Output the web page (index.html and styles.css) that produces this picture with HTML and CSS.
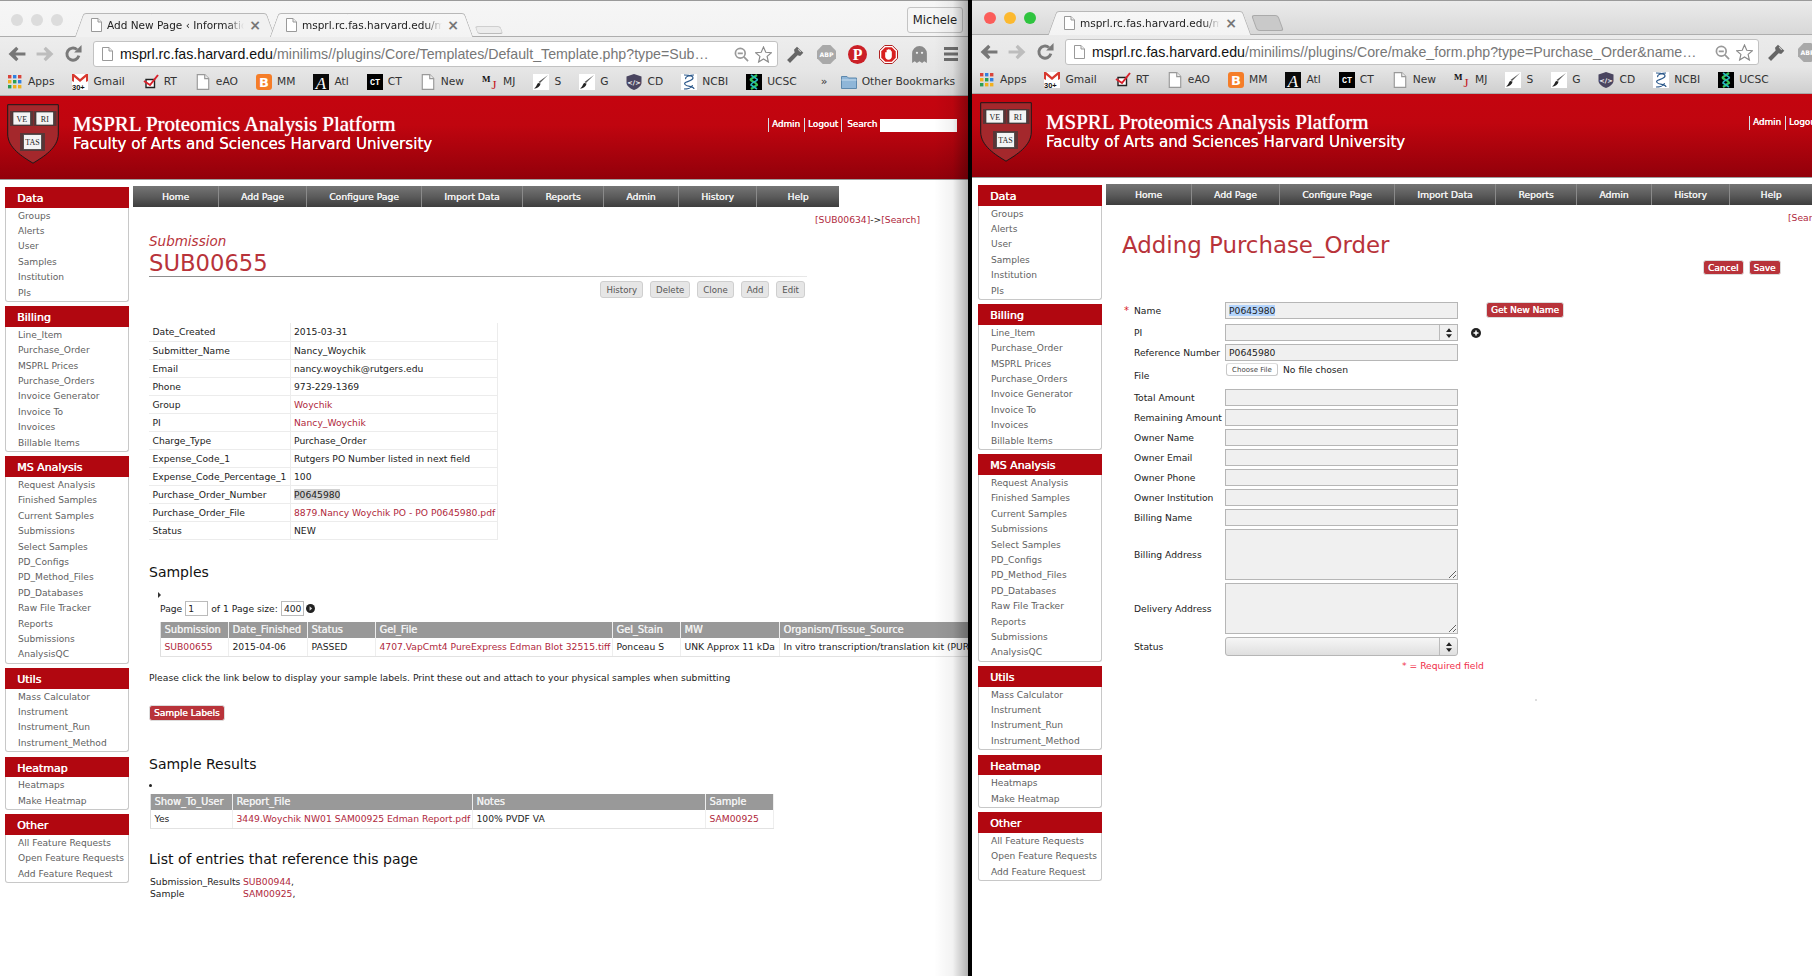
FILE: index.html
```html
<!DOCTYPE html>
<html lang="en">
<head>
<meta charset="utf-8">
<title>MSPRL Proteomics Analysis Platform</title>
<link rel="stylesheet" href="styles.css">
</head>
<body>
<svg class="sprite" aria-hidden="true">
  <symbol id="doc" viewBox="0 0 11 14"><path d="M.5.5H7L10.5 4V13.5H.5Z" fill="#fff" stroke="#999"/><path d="M7 .5V4H10.5" fill="#eee" stroke="#999"/></symbol>
  <symbol id="back" viewBox="0 0 16 16"><path d="M.5 8 7.3 1.6 9.3 3.5 6.6 6.6H15.5V9.4H6.6L9.3 12.5 7.3 14.4Z"/></symbol>
  <symbol id="forward" viewBox="0 0 16 16"><path d="M15.5 8 8.7 1.6 6.7 3.5 9.4 6.6H.5V9.4H9.4L6.7 12.5 8.7 14.4Z"/></symbol>
  <symbol id="reload" viewBox="0 0 16 16"><path d="M13.2 9.5A5.4 5.4 0 1 1 11.5 4" fill="none" stroke="#7a7a7a" stroke-width="2.6"/><path d="M9 6.6H15.6V0Z" fill="#7a7a7a"/></symbol>
  <symbol id="mag" viewBox="0 0 16 16"><circle cx="6.7" cy="6.7" r="5.2" fill="none" stroke="#999" stroke-width="1.8"/><path d="M4 6.7H9.4M10.6 10.6 15 15" stroke="#999" stroke-width="1.8"/></symbol>
  <symbol id="star" viewBox="0 0 18 18"><path d="M9 1 11.4 6.6 17.4 7.1 12.8 11 14.2 17 9 13.8 3.8 17 5.2 11 .6 7.1 6.6 6.6Z" fill="#fff" stroke="#8a8a8a" stroke-width="1.2"/></symbol>
  <symbol id="key" viewBox="0 0 18 18"><path d="M10.4 1.6 16.4 7.4 13.4 10.4 11 9.8 3.8 17 1 14.2 8.2 7 7.6 4.4Z" fill="#666"/><path d="M11.5 4 14 6.5" stroke="#ccc"/></symbol>
  <symbol id="stop" viewBox="0 0 20 20"><path d="M6 .5H14L19.5 6V14L14 19.5H6L.5 14V6Z" fill="#fff" stroke="#a11"/><path d="M6.6 2.4H13.4L17.6 6.6V13.4L13.4 17.6H6.6L2.4 13.4V6.6Z" fill="#d8201f"/><path d="M6.5 7.5V12C6.5 14 8 15.5 10 15.5S13.5 14 13.5 12V6.5H12.5V5H11V4.5H9.5V5H8V7.5Z" fill="#fff"/></symbol>
  <symbol id="ghost" viewBox="0 0 16 18"><path d="M1 17V8A7 7 0 0 1 15 8V17L12.5 15.5 10.5 17 8 15.5 5.5 17 3.5 15.5Z" fill="#8a8a8a"/><circle cx="5.6" cy="7.4" r="1.1" fill="#eee"/><circle cx="10.4" cy="7.4" r="1.1" fill="#eee"/></symbol>
  <symbol id="menu" viewBox="0 0 14 16"><path d="M0 1H14V4H0ZM0 6.5H14V9.5H0ZM0 12H14V15H0Z" fill="#6e6e6e"/></symbol>
  <symbol id="apps" viewBox="0 0 14 14"><path d="M0 0H3.4V3.4H0Z" fill="#d9443a"/><path d="M5 0H8.4V3.4H5Z" fill="#2f7fe0"/><path d="M10 0H13.4V3.4H10Z" fill="#d9443a"/><path d="M0 5H3.4V8.4H0Z" fill="#f2b01e"/><path d="M5 5H8.4V8.4H5Z" fill="#2a9f55"/><path d="M10 5H13.4V8.4H10Z" fill="#2f7fe0"/><path d="M0 10H3.4V13.4H0Z" fill="#2a9f55"/><path d="M5 10H8.4V13.4H5Z" fill="#f2b01e"/><path d="M10 10H13.4V13.4H10Z" fill="#f2b01e"/></symbol>
  <symbol id="rt" viewBox="0 0 16 16"><path d="M3 5.5H11.5V13.5H3Z" fill="#fff" stroke="#222" stroke-width="1.4"/><path d="M1 7 7 11 15 1" fill="none" stroke="#d8202a" stroke-width="2"/></symbol>
  <symbol id="brush" viewBox="0 0 16 16"><path d="M0 0H16V16H0Z" fill="#fff"/><path d="M15 1 7 9 5.5 8Z" fill="#555"/><path d="M7.5 9.5C7 13 4 14.5 1 14.5 3 13.5 3.5 11 5 9Z" fill="#222"/></symbol>
  <symbol id="ncbi" viewBox="0 0 16 16"><path d="M0 0H16V16H0Z" fill="#fff"/><path d="M3 1C10 1 14 3 11 5.5S2 8 4 10.5 13 12 13 15M13 1C9 1 3 3 5 5M3 15C6 15 11 14 11.5 11" fill="none" stroke="#2d5a8c" stroke-width="1.2"/></symbol>
  <symbol id="ucsc" viewBox="0 0 16 16"><path d="M0 0H16V16H0Z" fill="#000"/><path d="M11 1 5 5C3 7 11 8 11 11L5 15" fill="none" stroke="#35c65a" stroke-width="2.2"/><path d="M5 1 11 5C13 7 5 8 5 11L11 15" fill="none" stroke="#27b9c2" stroke-width="1.6"/></symbol>
  <symbol id="folder" viewBox="0 0 16 14"><path d="M.5 1.5H6L7.5 3H15.5V13.5H.5Z" fill="#8fb6d8" stroke="#5d88ad"/><path d="M.5 5H15.5" stroke="#c6dcee"/></symbol>
  <symbol id="plus" viewBox="0 0 10 10"><circle cx="5" cy="5" r="5" fill="#222"/><path d="M2.5 5H7.5M5 2.5V7.5" stroke="#fff" stroke-width="1.5"/></symbol>
  <symbol id="go" viewBox="0 0 10 10"><circle cx="5" cy="5" r="5" fill="#222"/><path d="M4 2.5 6.800 5 4 7.5Z" fill="#ddd"/></symbol>
  <symbol id="updown" viewBox="0 0 8 13"><path d="M4 0 8 5H0ZM4 13 0 8H8Z" fill="#222"/></symbol>
</svg>

<section class="window window-idle">
  <div class="tabbar">
    <div class="lights"><i class="light"></i><i class="light"></i><i class="light"></i></div>
    <div class="tab"><svg class="doc"><use href="#doc"/></svg><span class="tab-title">Add New Page ‹ Information</span><span class="tab-x">×</span></div>
    <div class="tab tab-active"><svg class="doc"><use href="#doc"/></svg><span class="tab-title">msprl.rc.fas.harvard.edu/minilims</span><span class="tab-x">×</span></div>
    <div class="newtab"></div>
    <div class="profile">Michele</div>
  </div>
  <div class="toolbar">
    <svg class="nav-ic nav-dark"><use href="#back"/></svg>
    <svg class="nav-ic nav-light"><use href="#forward"/></svg>
    <svg class="nav-ic"><use href="#reload"/></svg>
    <div class="omnibox">
      <svg class="doc"><use href="#doc"/></svg>
      <span class="url"><b>msprl.rc.fas.harvard.edu</b>/minilims//plugins/Core/Templates/Default_Template.php?type=Sub…</span>
      <svg class="omni-ic"><use href="#mag"/></svg>
      <svg class="omni-star"><use href="#star"/></svg>
    </div>
    <div class="ext"><svg class="ext-ic"><use href="#key"/></svg></div>
    <div class="ext"><svg class="ext-ic" viewBox="0 0 20 20"><path d="M6 0H14L20 6V14L14 20H6L0 14V6Z" fill="#a9a9a9"/><text x="10" y="13" class="svg-abp">ABP</text></svg></div>
    <div class="ext"><svg class="ext-ic" viewBox="0 0 18 18"><circle cx="9" cy="9" r="9" fill="#cb2027"/><text x="9" y="14.5" class="svg-pin">P</text></svg></div>
    <div class="ext"><svg class="ext-ic"><use href="#stop"/></svg></div>
    <div class="ext"><svg class="ext-ic"><use href="#ghost"/></svg></div>
    <div class="ext"><svg class="ext-menu"><use href="#menu"/></svg></div>
  </div>
  <div class="bookmarks">
    <span class="bm"><svg class="bm-ic bm-apps"><use href="#apps"/></svg>Apps</span>
    <span class="bm"><svg class="bm-ic" viewBox="0 0 16 16"><path d="M0 0H16V16H0Z" fill="#fff"/><path d="M0 0H2L8 5 14 0H16V7L14 8V3L8 8 2 3V8L0 7Z" fill="#d8392f"/><text x="0" y="15.6" class="svg-count">30+</text></svg>Gmail</span>
    <span class="bm"><svg class="bm-ic"><use href="#rt"/></svg>RT</span>
    <span class="bm"><svg class="bm-ic"><use href="#doc"/></svg>eAO</span>
    <span class="bm"><svg class="bm-ic" viewBox="0 0 16 16"><rect width="16" height="16" rx="3" fill="#f57d28"/><text x="8" y="13" class="svg-blog">B</text></svg>MM</span>
    <span class="bm"><svg class="bm-ic" viewBox="0 0 16 16"><path d="M0 0H16V16H0Z" fill="#0a0a0a"/><text x="8" y="14.5" class="svg-atl">A</text></svg>Atl</span>
    <span class="bm"><svg class="bm-ic" viewBox="0 0 16 16"><path d="M0 0H16V16H0Z" fill="#000"/><text x="8" y="10.5" class="svg-ct">CT</text></svg>CT</span>
    <span class="bm"><svg class="bm-ic"><use href="#doc"/></svg>New</span>
    <span class="bm"><svg class="bm-ic" viewBox="0 0 16 16"><text x="0" y="8" class="svg-m">M</text><text x="9.5" y="15" class="svg-j">J</text></svg>MJ</span>
    <span class="bm"><svg class="bm-ic"><use href="#brush"/></svg>S</span>
    <span class="bm"><svg class="bm-ic"><use href="#brush"/></svg>G</span>
    <span class="bm"><svg class="bm-ic" viewBox="0 0 16 16"><path d="M8 0 15.5 2.5V9C15.5 12 11 15 8 16 5 15 .5 12 .5 9V2.5Z" fill="#4a4560"/><text x="8" y="10.5" class="svg-cd">&lt;/&gt;</text></svg>CD</span>
    <span class="bm"><svg class="bm-ic"><use href="#ncbi"/></svg>NCBI</span>
    <span class="bm"><svg class="bm-ic"><use href="#ucsc"/></svg>UCSC</span>
    <span class="bm-more">»</span>
    <span class="bm"><svg class="bm-ic"><use href="#folder"/></svg>Other Bookmarks</span>
  </div>
  <header class="masthead">
    <svg class="crest" viewBox="0 0 52 60">
      <path d="M.7.7H51.3V30C51.3 44 36 53 26 59.2 16 53 .7 44 .7 30Z" fill="#a4282c" stroke="#1a1a1a"/>
      <path d="M3 7H26V22H3ZM26.500 7H49.500V22H26.500ZM13 29H38V47H13Z" fill="#3a3a3a" opacity=".7"/>
      <path d="M6 8H23.500V21H6ZM29 8H46.500V21H29ZM16.500 30.500H34.500V45.500H16.500Z" fill="#f4f4f4" stroke="#333" stroke-width=".7"/>
      <text x="14.800" y="18" class="svg-crest">VE</text><text x="37.800" y="18" class="svg-crest">RI</text><text x="25.500" y="41" class="svg-crest">TAS</text>
    </svg>
    <div class="brand">
      <div class="brand-title">MSPRL Proteomics Analysis Platform</div>
      <div class="brand-sub">Faculty of Arts and Sciences Harvard University</div>
    </div>
    <div class="userlinks"><a class="ul">Admin</a><a class="ul">Logout</a><a class="ul">Search</a><input class="search"></div>
  </header>
  <div class="page">
    <aside class="sidebar">
      <div class="panel"><h3>Data</h3><a>Groups</a><a>Alerts</a><a>User</a><a>Samples</a><a>Institution</a><a>PIs</a></div>
      <div class="panel"><h3>Billing</h3><a>Line_Item</a><a>Purchase_Order</a><a>MSPRL Prices</a><a>Purchase_Orders</a><a>Invoice Generator</a><a>Invoice To</a><a>Invoices</a><a>Billable Items</a></div>
      <div class="panel"><h3>MS Analysis</h3><a>Request Analysis</a><a>Finished Samples</a><a>Current Samples</a><a>Submissions</a><a>Select Samples</a><a>PD_Configs</a><a>PD_Method_Files</a><a>PD_Databases</a><a>Raw File Tracker</a><a>Reports</a><a>Submissions</a><a>AnalysisQC</a></div>
      <div class="panel"><h3>Utils</h3><a>Mass Calculator</a><a>Instrument</a><a>Instrument_Run</a><a>Instrument_Method</a></div>
      <div class="panel"><h3>Heatmap</h3><a>Heatmaps</a><a>Make Heatmap</a></div>
      <div class="panel"><h3>Other</h3><a>All Feature Requests</a><a>Open Feature Requests</a><a>Add Feature Request</a></div>
    </aside>
    <main class="main">
      <nav class="topnav"><a class="n-home">Home</a><a class="n-add">Add Page</a><a class="n-conf">Configure Page</a><a class="n-imp">Import Data</a><a class="n-rep">Reports</a><a class="n-adm">Admin</a><a class="n-his">History</a><a class="n-help">Help</a></nav>
      <div class="crumb"><a class="link">[SUB00634]</a>-&gt;<a class="link">[Search]</a></div>
      <div class="content">
        <div class="kind">Submission</div>
        <h1 class="record">SUB00655</h1>
        <div class="actions"><button class="btn">History</button><button class="btn">Delete</button><button class="btn">Clone</button><button class="btn">Add</button><button class="btn">Edit</button></div>
        <table class="props">
          <tr><td>Date_Created</td><td>2015-03-31</td></tr>
          <tr><td>Submitter_Name</td><td>Nancy_Woychik</td></tr>
          <tr><td>Email</td><td>nancy.woychik@rutgers.edu</td></tr>
          <tr><td>Phone</td><td>973-229-1369</td></tr>
          <tr><td>Group</td><td><a class="link">Woychik</a></td></tr>
          <tr><td>PI</td><td><a class="link">Nancy_Woychik</a></td></tr>
          <tr><td>Charge_Type</td><td>Purchase_Order</td></tr>
          <tr><td>Expense_Code_1</td><td>Rutgers PO Number listed in next field</td></tr>
          <tr><td>Expense_Code_Percentage_1</td><td>100</td></tr>
          <tr><td>Purchase_Order_Number</td><td><span class="picked">P0645980</span></td></tr>
          <tr><td>Purchase_Order_File</td><td><a class="link">8879.Nancy Woychik PO - PO P0645980.pdf</a></td></tr>
          <tr><td>Status</td><td>NEW</td></tr>
        </table>
        <h2 class="sec sec-samples">Samples</h2>
        <div class="triangle"></div>
        <div class="pager">Page <input class="pg pg-page" value="1"> <span class="pg-of">of 1 Page size:</span> <input class="pg pg-size" value="400"> <svg class="pg-go"><use href="#go"/></svg></div>
        <table class="grid grid-samples">
          <tr><th>Submission</th><th>Date_Finished</th><th>Status</th><th>Gel_File</th><th>Gel_Stain</th><th>MW</th><th>Organism/Tissue_Source</th></tr>
          <tr><td><a class="link">SUB00655</a></td><td>2015-04-06</td><td>PASSED</td><td><a class="link">4707.VapCmt4 PureExpress Edman Blot 32515.tiff</a></td><td>Ponceau S</td><td>UNK Approx 11 kDa</td><td>In vitro transcription/translation kit (PURExpress)</td></tr>
        </table>
        <p class="note">Please click the link below to display your sample labels. Print these out and attach to your physical samples when submitting</p>
        <button class="btn-red btn-labels">Sample Labels</button>
        <h2 class="sec sec-results">Sample Results</h2>
        <div class="dot"></div>
        <table class="grid grid-results">
          <tr><th>Show_To_User</th><th>Report_File</th><th>Notes</th><th>Sample</th></tr>
          <tr><td>Yes</td><td><a class="link">3449.Woychik NW01 SAM00925 Edman Report.pdf</a></td><td>100% PVDF VA</td><td><a class="link">SAM00925</a></td></tr>
        </table>
        <h2 class="sec sec-refs">List of entries that reference this page</h2>
        <div class="refs"><span>Submission_Results</span><span><a class="link">SUB00944</a>,</span><span>Sample</span><span><a class="link">SAM00925</a>,</span></div>
      </div>
    </main>
  </div>
</section>

<section class="window window-active">
  <div class="tabbar">
    <div class="lights"><i class="light red"></i><i class="light amber"></i><i class="light green"></i></div>
    <div class="tab tab-active"><svg class="doc"><use href="#doc"/></svg><span class="tab-title">msprl.rc.fas.harvard.edu/minilims</span><span class="tab-x">×</span></div>
    <div class="newtab"></div>
  </div>
  <div class="toolbar">
    <svg class="nav-ic nav-dark"><use href="#back"/></svg>
    <svg class="nav-ic nav-light"><use href="#forward"/></svg>
    <svg class="nav-ic"><use href="#reload"/></svg>
    <div class="omnibox">
      <svg class="doc"><use href="#doc"/></svg>
      <span class="url"><b>msprl.rc.fas.harvard.edu</b>/minilims//plugins/Core/make_form.php?type=Purchase_Order&amp;name…</span>
      <svg class="omni-ic"><use href="#mag"/></svg>
      <svg class="omni-star"><use href="#star"/></svg>
    </div>
    <div class="ext"><svg class="ext-ic"><use href="#key"/></svg></div>
    <div class="ext"><svg class="ext-ic" viewBox="0 0 20 20"><path d="M6 0H14L20 6V14L14 20H6L0 14V6Z" fill="#a9a9a9"/><text x="10" y="13" class="svg-abp">ABP</text></svg></div>
  </div>
  <div class="bookmarks">
    <span class="bm"><svg class="bm-ic bm-apps"><use href="#apps"/></svg>Apps</span>
    <span class="bm"><svg class="bm-ic" viewBox="0 0 16 16"><path d="M0 0H16V16H0Z" fill="#fff"/><path d="M0 0H2L8 5 14 0H16V7L14 8V3L8 8 2 3V8L0 7Z" fill="#d8392f"/><text x="0" y="15.6" class="svg-count">30+</text></svg>Gmail</span>
    <span class="bm"><svg class="bm-ic"><use href="#rt"/></svg>RT</span>
    <span class="bm"><svg class="bm-ic"><use href="#doc"/></svg>eAO</span>
    <span class="bm"><svg class="bm-ic" viewBox="0 0 16 16"><rect width="16" height="16" rx="3" fill="#f57d28"/><text x="8" y="13" class="svg-blog">B</text></svg>MM</span>
    <span class="bm"><svg class="bm-ic" viewBox="0 0 16 16"><path d="M0 0H16V16H0Z" fill="#0a0a0a"/><text x="8" y="14.5" class="svg-atl">A</text></svg>Atl</span>
    <span class="bm"><svg class="bm-ic" viewBox="0 0 16 16"><path d="M0 0H16V16H0Z" fill="#000"/><text x="8" y="10.5" class="svg-ct">CT</text></svg>CT</span>
    <span class="bm"><svg class="bm-ic"><use href="#doc"/></svg>New</span>
    <span class="bm"><svg class="bm-ic" viewBox="0 0 16 16"><text x="0" y="8" class="svg-m">M</text><text x="9.5" y="15" class="svg-j">J</text></svg>MJ</span>
    <span class="bm"><svg class="bm-ic"><use href="#brush"/></svg>S</span>
    <span class="bm"><svg class="bm-ic"><use href="#brush"/></svg>G</span>
    <span class="bm"><svg class="bm-ic" viewBox="0 0 16 16"><path d="M8 0 15.5 2.5V9C15.5 12 11 15 8 16 5 15 .5 12 .5 9V2.5Z" fill="#4a4560"/><text x="8" y="10.5" class="svg-cd">&lt;/&gt;</text></svg>CD</span>
    <span class="bm"><svg class="bm-ic"><use href="#ncbi"/></svg>NCBI</span>
    <span class="bm"><svg class="bm-ic"><use href="#ucsc"/></svg>UCSC</span>
    <span class="bm-more">»</span>
  </div>
  <header class="masthead">
    <svg class="crest" viewBox="0 0 52 60">
      <path d="M.7.7H51.3V30C51.3 44 36 53 26 59.2 16 53 .7 44 .7 30Z" fill="#a4282c" stroke="#1a1a1a"/>
      <path d="M3 7H26V22H3ZM26.500 7H49.500V22H26.500ZM13 29H38V47H13Z" fill="#3a3a3a" opacity=".7"/>
      <path d="M6 8H23.500V21H6ZM29 8H46.500V21H29ZM16.500 30.500H34.500V45.500H16.500Z" fill="#f4f4f4" stroke="#333" stroke-width=".7"/>
      <text x="14.800" y="18" class="svg-crest">VE</text><text x="37.800" y="18" class="svg-crest">RI</text><text x="25.500" y="41" class="svg-crest">TAS</text>
    </svg>
    <div class="brand">
      <div class="brand-title">MSPRL Proteomics Analysis Platform</div>
      <div class="brand-sub">Faculty of Arts and Sciences Harvard University</div>
    </div>
    <div class="userlinks"><a class="ul">Admin</a><a class="ul">Logout</a></div>
  </header>
  <div class="page">
    <aside class="sidebar">
      <div class="panel"><h3>Data</h3><a>Groups</a><a>Alerts</a><a>User</a><a>Samples</a><a>Institution</a><a>PIs</a></div>
      <div class="panel"><h3>Billing</h3><a>Line_Item</a><a>Purchase_Order</a><a>MSPRL Prices</a><a>Purchase_Orders</a><a>Invoice Generator</a><a>Invoice To</a><a>Invoices</a><a>Billable Items</a></div>
      <div class="panel"><h3>MS Analysis</h3><a>Request Analysis</a><a>Finished Samples</a><a>Current Samples</a><a>Submissions</a><a>Select Samples</a><a>PD_Configs</a><a>PD_Method_Files</a><a>PD_Databases</a><a>Raw File Tracker</a><a>Reports</a><a>Submissions</a><a>AnalysisQC</a></div>
      <div class="panel"><h3>Utils</h3><a>Mass Calculator</a><a>Instrument</a><a>Instrument_Run</a><a>Instrument_Method</a></div>
      <div class="panel"><h3>Heatmap</h3><a>Heatmaps</a><a>Make Heatmap</a></div>
      <div class="panel"><h3>Other</h3><a>All Feature Requests</a><a>Open Feature Requests</a><a>Add Feature Request</a></div>
    </aside>
    <main class="main">
      <nav class="topnav"><a class="n-home">Home</a><a class="n-add">Add Page</a><a class="n-conf">Configure Page</a><a class="n-imp">Import Data</a><a class="n-rep">Reports</a><a class="n-adm">Admin</a><a class="n-his">History</a><a class="n-help">Help</a></nav>
      <div class="crumb"><a class="link">[Search]</a></div>
      <div class="content">
        <h1 class="adding">Adding Purchase_Order</h1>
        <div class="form-actions"><button class="btn-red">Cancel</button><button class="btn-red">Save</button></div>
        <form class="form">
          <span class="req">*</span><label>Name</label><div class="field"><span class="sel">P0645980</span></div><button type="button" class="btn-red btn-newname">Get New Name</button>
          <span></span><label>PI</label><div class="select"><span class="select-box"></span><span class="select-arrows"><svg class="updown"><use href="#updown"/></svg></span></div><svg class="plus"><use href="#plus"/></svg>
          <span></span><label>Reference Number</label><input class="field" value="P0645980"><span></span>
          <span></span><label>File</label><div class="file"><span class="file-btn">Choose File</span><span>No file chosen</span></div><span></span>
          <span></span><label>Total Amount</label><input class="field"><span></span>
          <span></span><label>Remaining Amount</label><input class="field"><span></span>
          <span></span><label>Owner Name</label><input class="field"><span></span>
          <span></span><label>Owner Email</label><input class="field"><span></span>
          <span></span><label>Owner Phone</label><input class="field"><span></span>
          <span></span><label>Owner Institution</label><input class="field"><span></span>
          <span></span><label>Billing Name</label><input class="field"><span></span>
          <span></span><label>Billing Address</label><textarea class="area"></textarea><span></span>
          <span></span><label>Delivery Address</label><textarea class="area"></textarea><span></span>
          <span></span><label>Status</label><div class="select select-status"><span class="select-box"></span><span class="select-arrows"><svg class="updown"><use href="#updown"/></svg></span></div><span></span>
        </form>
        <div class="required-note">* = Required field</div>
        <div class="speck"></div>
      </div>
    </main>
  </div>
</section>
</body>
</html>
```
FILE: styles.css
```css
* { box-sizing: border-box; }
html, body { margin: 0; padding: 0; }
body {
  width: 1812px; height: 976px; overflow: hidden; display: flex; gap: 4px;
  background: #000; font-family: "DejaVu Sans", sans-serif; font-size: 9.2px; color: #222;
}
.sprite { position: absolute; width: 0; height: 0; }
a { text-decoration: none; color: inherit; }
svg { display: block; flex: none; }

/* windows */
.window { position: relative; height: 976px; overflow: hidden; background: #fff; }
.window-idle { width: 968px; --page-pad: 5px; --tabbar: 37px; --brand: 695px; --crest: 7px; --omni: 685px; --more: 6px;
  --bar-a: #f6f6f6; --bar-b: #f3f3f3; --bar-c: #ededed; --bar-d: #d9d9d9; }
.window-active { width: 840px; --page-pad: 6px; --tabbar: 35px; --brand: 703px; --crest: 8px; --omni: 694px; --more: 26px;
  --bar-a: #ebebeb; --bar-b: #d8d8d8; --bar-c: #ebebeb; --bar-d: #cfcfcf; }
.window-idle::after {
  content: ""; position: absolute; top: 0; right: 0; bottom: 0; width: 34px; pointer-events: none;
  background: linear-gradient(90deg, rgba(0,0,0,0), rgba(0,0,0,.05) 55%, rgba(0,0,0,.3));
}

/* tab strip */
.tabbar {
  height: var(--tabbar); display: flex; align-items: flex-end;
  background: linear-gradient(var(--bar-a), var(--bar-b));
  border-top: 1px solid #9a9a9a; border-bottom: 1px solid #aeaeae;
}
.lights { display: flex; gap: 8px; width: 79px; padding: 0 0 0 11px; align-self: flex-start; margin-top: 13px; }
.window-active .lights { margin-top: 11px; width: 80px; padding-left: 12px; }
.light { width: 12px; height: 12px; border-radius: 50%; background: #dcdcdc; }
.red { background: #fb5d5a; }
.amber { background: #fcb92f; }
.green { background: #2fc43f; }
.tab {
  position: relative; z-index: 0; width: 192px; height: 24px; margin-right: 3px; margin-bottom: -1px;
  display: flex; align-items: center; padding: 0 10px 0 12px; font-size: 10.5px; color: #222;
}
.tab-active { width: 195px; }
.tab::before, .tab::after {
  content: ""; position: absolute; top: 0; bottom: 0; width: 60%; z-index: -1;
  background: #f1f1f1; border: 1px solid #b8b8b8; border-bottom: 0;
}
.tab::before { left: 0; border-right: 0; transform: skewX(-20deg); border-radius: 3px 0 0 0; }
.tab::after { right: 0; border-left: 0; transform: skewX(20deg); border-radius: 0 3px 0 0; }
.tab-active::before, .tab-active::after { background: linear-gradient(#f7f7f7, #f3f3f3); }
.doc { width: 11px; height: 14px; margin-right: 5px; }
.tab-title {
  flex: 1; overflow: hidden; white-space: nowrap;
  -webkit-mask-image: linear-gradient(90deg, #000 88%, transparent);
  mask-image: linear-gradient(90deg, #000 88%, transparent);
}
.tab-x { width: 12px; margin-left: 5px; color: #777; font-size: 14px; font-weight: 700; text-align: center; }
.newtab {
  width: 26px; height: 8px; margin: 0 0 2px 4px; background: #ececec;
  border: 1px solid #cfcfcf; border-bottom-color: #bbb; border-radius: 3px; transform: skewX(20deg);
}
.window-active .newtab { height: 16px; margin-bottom: 3px; width: 27px; background: #c9c9c9; border-color: #aaa; }
.profile {
  margin: 0 5px 3px auto; width: 56px; height: 26px; line-height: 24px; text-align: center;
  border: 1px solid #c4c4c4; border-radius: 3px; background: #f6f6f6; font-size: 11.6px; color: #222;
}

/* toolbar */
.toolbar {
  height: 32px; padding: 2px 0 0 8px; display: flex; align-items: center;
  background: linear-gradient(var(--bar-c), #e6e6e6);
}
.nav-ic { width: 18px; height: 18px; margin-right: 10px; }
.nav-dark { fill: #777; }
.nav-light { fill: #bdbdbd; }
.omnibox {
  width: var(--omni); height: 26px; margin-left: 1px; flex: none; display: flex; align-items: center; padding: 0 5px 0 8px;
  background: #fff; border: 1px solid #c2c2c2; border-radius: 3px;
}
.omnibox .doc { margin-right: 7px; }
.url { flex: 1; overflow: hidden; white-space: nowrap; font: 14.2px "Liberation Sans", sans-serif; color: #777; }
.url b { font-weight: 400; color: #111; }
.omni-ic { width: 15px; height: 15px; margin-left: 6px; }
.omni-star { width: 17px; height: 17px; margin-left: 6px; }
.ext { width: 31px; display: flex; justify-content: center; flex: none; }
.omnibox + .ext { margin-left: 2px; }
.ext-ic { width: 19px; height: 19px; }
.ext-menu { width: 14px; height: 16px; }

/* bookmarks */
.bookmarks {
  height: 27px; padding: 0 0 1px 8px; display: flex; align-items: center; gap: 18px; overflow: hidden;
  background: linear-gradient(#e6e6e6, var(--bar-d)); border-bottom: 1px solid #a9a9a9;
  font-size: 10.7px; color: #333; white-space: nowrap;
}
.bm { display: flex; align-items: center; gap: 5px; flex: none; }
.bm-ic { width: 16px; height: 16px; }
.bm-apps { width: 14px; height: 14px; margin-right: 1px; }
.bm-more { width: 8px; margin-left: var(--more); margin-right: -6px; font-size: 11px; color: #333; flex: none; }

/* masthead */
.masthead {
  height: 84px; display: flex; align-items: flex-start; padding-left: var(--crest);
  background: linear-gradient(#c4040f, #c0050f 35%, #92000a);
  border-bottom: 1px solid #9d9d9d; color: #fff;
}
.crest { width: 52px; height: 60px; margin-top: 8px; }
.brand { width: var(--brand); flex: none; margin-left: 14px; padding-top: 16px; }
.brand-title { font: 20.9px/24px "Liberation Serif", serif; text-shadow: 0 0 1px #fff; white-space: nowrap; }
.brand-sub { font-size: 15.14px; line-height: 18px; margin-top: -1px; white-space: nowrap; text-shadow: 0 0 .6px #fff; }
.userlinks { display: flex; align-items: center; height: 14px; margin-top: 22px; flex: none; font-size: 8.8px; text-shadow: .3px 0 0 #fff; }
.ul { display: block; height: 14px; line-height: 13px; padding: 0 3px; border-left: 1px solid #d5dfe8; margin-right: 1px; }
.ul + .ul { margin-right: 0; }
.ul + .ul + .ul { padding-left: 5px; }
.search { width: 77px; height: 13px; border: 0; padding: 0; background: #fff; }

/* page */
.page { display: flex; align-items: flex-start; padding-left: var(--page-pad); }
.sidebar { width: 124px; flex: none; padding-top: 7px; display: flex; flex-direction: column; gap: 4.4px; }
.panel { background: #fff; border: 1px solid #c8c8c8; border-top: 0; border-radius: 0 0 3px 3px; }
.panel h3 {
  margin: 0 -1px 1px; height: 20.6px; padding-left: 12px; line-height: 23px;
  background: #b10710; color: #fff; font-size: 11px; font-weight: 400; text-shadow: .4px 0 0 #fff;
}
.panel a { display: block; height: 15.4px; line-height: 15.4px; padding-left: 12px; color: #5f5f5f; font-size: 9.1px; white-space: nowrap; }
.main { margin-left: 4px; width: 1100px; flex: none; }

/* top nav */
.topnav {
  margin-top: 6px; width: 706px; height: 21px; display: flex;
  background: linear-gradient(#757575, #5c5c5c 50%, #3d3d3d);
}
.topnav a {
  display: block; line-height: 21px; text-align: center; color: #f2f2f2; font-size: 9.2px;
  border-right: 1px solid #8a8a8a; text-shadow: .3px 0 0 #f2f2f2;
}
.n-home { width: 86px; }
.n-add { width: 88px; }
.n-conf { width: 115px; }
.n-imp { width: 101px; }
.n-rep { width: 81px; }
.n-adm { width: 75px; }
.n-his { width: 78px; }
.topnav .n-help { width: 82px; border-right: 0; }

.crumb { margin: 7px 0 0 682px; height: 12px; line-height: 12px; color: #222; font-size: 9.2px; white-space: nowrap; }
.link { color: #b0283c; }
.content { padding-left: 16px; }

.kind { margin-top: 7px; font-size: 13.5px; line-height: 16px; font-style: italic; color: #b8333a; }
.record {
  margin: 1px 0 0; width: 658px; height: 27px; font-size: 22.7px; line-height: 26px; font-weight: 400; color: #b8333a;
  border-bottom: 1px solid; border-image: linear-gradient(90deg, #8c8c8c, #aaa 50%, #e8e8e8) 1;
}
.actions { width: 656px; margin-top: 4px; display: flex; justify-content: flex-end; gap: 7px; }
.btn {
  height: 17px; padding: 0 5px; background: #e6e6e6; border: 1px solid #cfcfcf; border-radius: 3px;
  font: 8.6px "DejaVu Sans", sans-serif; color: #555;
}

/* property table */
.props { margin-top: 25px; width: 349px; table-layout: fixed; border-collapse: collapse; }
.props td { height: 18px; padding: 0 0 0 3.5px; border-bottom: 1px solid #ececec; border-right: 1px solid #ececec; white-space: nowrap; }
.props td:first-child { width: 141px; }
.picked { background: #d0d0d0; }

.sec { margin: 0; font-size: 14px; line-height: 18px; font-weight: 400; color: #111; }
.sec-samples { margin-top: 23px; }
.triangle { margin: 11px 0 0 9px; width: 0; height: 0; border-left: 3px solid #333; border-top: 3px solid transparent; border-bottom: 3px solid transparent; }
.pager { margin: 3px 0 0 11px; height: 15px; display: flex; align-items: center; white-space: nowrap; }
.pg { height: 15px; padding: 0 0 0 2px; margin: 0; border: 1px solid #bbb; font: 9.2px "DejaVu Sans", sans-serif; color: #222; background: #fff; }
.pg-page { width: 23px; margin-left: 3px; }
.pg-of { margin: 0 3px 0 3px; }
.pg-size { width: 23px; }
.pg-go { width: 9px; height: 9px; margin-left: 2px; }

.grid { table-layout: fixed; border-collapse: collapse; border-left: 1px solid #dedede; }
.grid th {
  height: 16px; padding: 0 0 0 3.5px; background: #999; color: #f1f1f1; text-align: left; font-size: 9.8px; font-weight: 400;
  border-right: 1px solid #eee; text-shadow: .3px 0 0 #f1f1f1; white-space: nowrap; overflow: hidden;
}
.grid td { height: 18.5px; padding: 0 0 0 3.5px; border-bottom: 1px solid #e2e2e2; border-right: 1px solid #eee; white-space: nowrap; overflow: hidden; }
.grid-samples { margin: 6px 0 0 11px; width: 1019px; }
.grid-samples th:nth-child(1) { width: 68px; }
.grid-samples th:nth-child(2) { width: 79px; }
.grid-samples th:nth-child(3) { width: 68px; }
.grid-samples th:nth-child(4) { width: 237px; }
.grid-samples th:nth-child(5) { width: 68px; }
.grid-samples th:nth-child(6) { width: 99px; }
.grid-samples th:nth-child(7) { width: 400px; }

.note { margin: 15px 0 0; line-height: 12px; white-space: nowrap; }
.btn-red {
  height: 16px; padding: 0 4px; background: #b8333a; border: 1px solid #dcdcdc; border-radius: 3px;
  color: #fff; font: 9px "DejaVu Sans", sans-serif; text-shadow: .3px 0 0 #fff; white-space: nowrap;
}
.btn-labels { display: block; margin-top: 21px; }
.sec-results { margin-top: 34px; }
.dot { margin: 11px 0 0 0; width: 3px; height: 3px; border-radius: 50%; background: #222; }
.grid-results { margin: 7px 0 0 1px; width: 623px; }
.grid-results th:nth-child(1) { width: 82px; }
.grid-results th:nth-child(2) { width: 240px; }
.grid-results th:nth-child(3) { width: 233px; }
.grid-results th:nth-child(4) { width: 68px; }
.sec-refs { margin-top: 21px; }
.refs { margin: 8px 0 0 1px; display: grid; grid-template-columns: 93px auto; justify-content: start; line-height: 12px; }

/* form window */
.adding { margin: 7px 0 0; font-size: 22.9px; line-height: 28px; font-weight: 400; color: #b8333a; white-space: nowrap; }
.form-actions { margin: 1px 0 0 581px; display: flex; gap: 5px; }
.form-actions .btn-red { height: 15px; line-height: 12px; }
.form {
  margin-top: 27px; display: grid; grid-template-columns: 12px 91px 233px auto;
  grid-template-rows: 19px 17px 17px 22px repeat(7, 17px) 51px 51px 19px;
  row-gap: 3px; align-items: center; justify-content: start; color: #222;
}
.form > :nth-child(-n+4) { align-self: start; }
.form label { white-space: nowrap; line-height: 17px; }
.req { color: #d81c2a; font-size: 10px; line-height: 17px; padding-left: 2px; }
.field {
  display: block; width: 233px; height: 17px; padding: 0 3px; margin: 0; background: #f0f0f0; border: 1px solid #b6b6b6;
  font: 9.2px/15px "DejaVu Sans", sans-serif; color: #222;
}
.sel { background: #b3d4fc; }
.btn-newname { justify-self: start; margin-left: 28px; }
.plus { width: 10px; height: 10px; margin-left: 13px; }
.select { width: 233px; height: 17px; display: flex; background: #f0f0f0; border: 1px solid #b6b6b6; }
.select-box { flex: 1; }
.select-arrows { width: 18px; display: flex; align-items: center; justify-content: center; border-left: 1px solid #bbb; }
.updown { width: 6px; height: 10px; }
.select-status { height: 19px; border-radius: 3px; background: linear-gradient(#f6f6f6, #dfdfdf); }
.file { align-self: start; display: flex; align-items: center; gap: 5px; margin-top: -1px; white-space: nowrap; }
.file-btn {
  width: 52px; height: 13px; line-height: 12px; text-align: center; margin-left: 1px; font-size: 7px; color: #444;
  background: #fff; border: 1px solid #c8c8c8; border-top-color: #ddd; border-radius: 3px;
}
.area { display: block; width: 233px; height: 51px; margin: 0; padding: 2px; background: #f0f0f0; border: 1px solid #b6b6b6; }
.required-note { margin: 4px 0 0 280px; line-height: 12px; color: #f0304a; white-space: nowrap; }
.speck { margin: 27px 0 0 413px; width: 2px; height: 2px; background: #ddd; }

/* svg text */
.svg-abp { font: 700 6.5px "DejaVu Sans", sans-serif; fill: #fff; text-anchor: middle; }
.svg-pin { font: 700 15px "Liberation Serif", serif; fill: #fff; text-anchor: middle; }
.svg-count { font: 700 7.5px "Liberation Sans", sans-serif; fill: #111; }
.svg-blog { font: 700 13px "DejaVu Sans", sans-serif; fill: #fff; text-anchor: middle; }
.svg-atl { font: italic 400 17px "Liberation Serif", serif; fill: #fff; text-anchor: middle; }
.svg-ct { font: 700 8.5px "Liberation Mono", monospace; fill: #fff; text-anchor: middle; }
.svg-m { font: 700 9px "Liberation Serif", serif; fill: #111; }
.svg-j { font: 400 13px "Liberation Serif", serif; fill: #c4141e; }
.svg-cd { font: 700 6.5px "DejaVu Sans", sans-serif; fill: #fff; text-anchor: middle; }
.svg-crest { font: 400 8px "Liberation Serif", serif; fill: #222; text-anchor: middle; }
```
